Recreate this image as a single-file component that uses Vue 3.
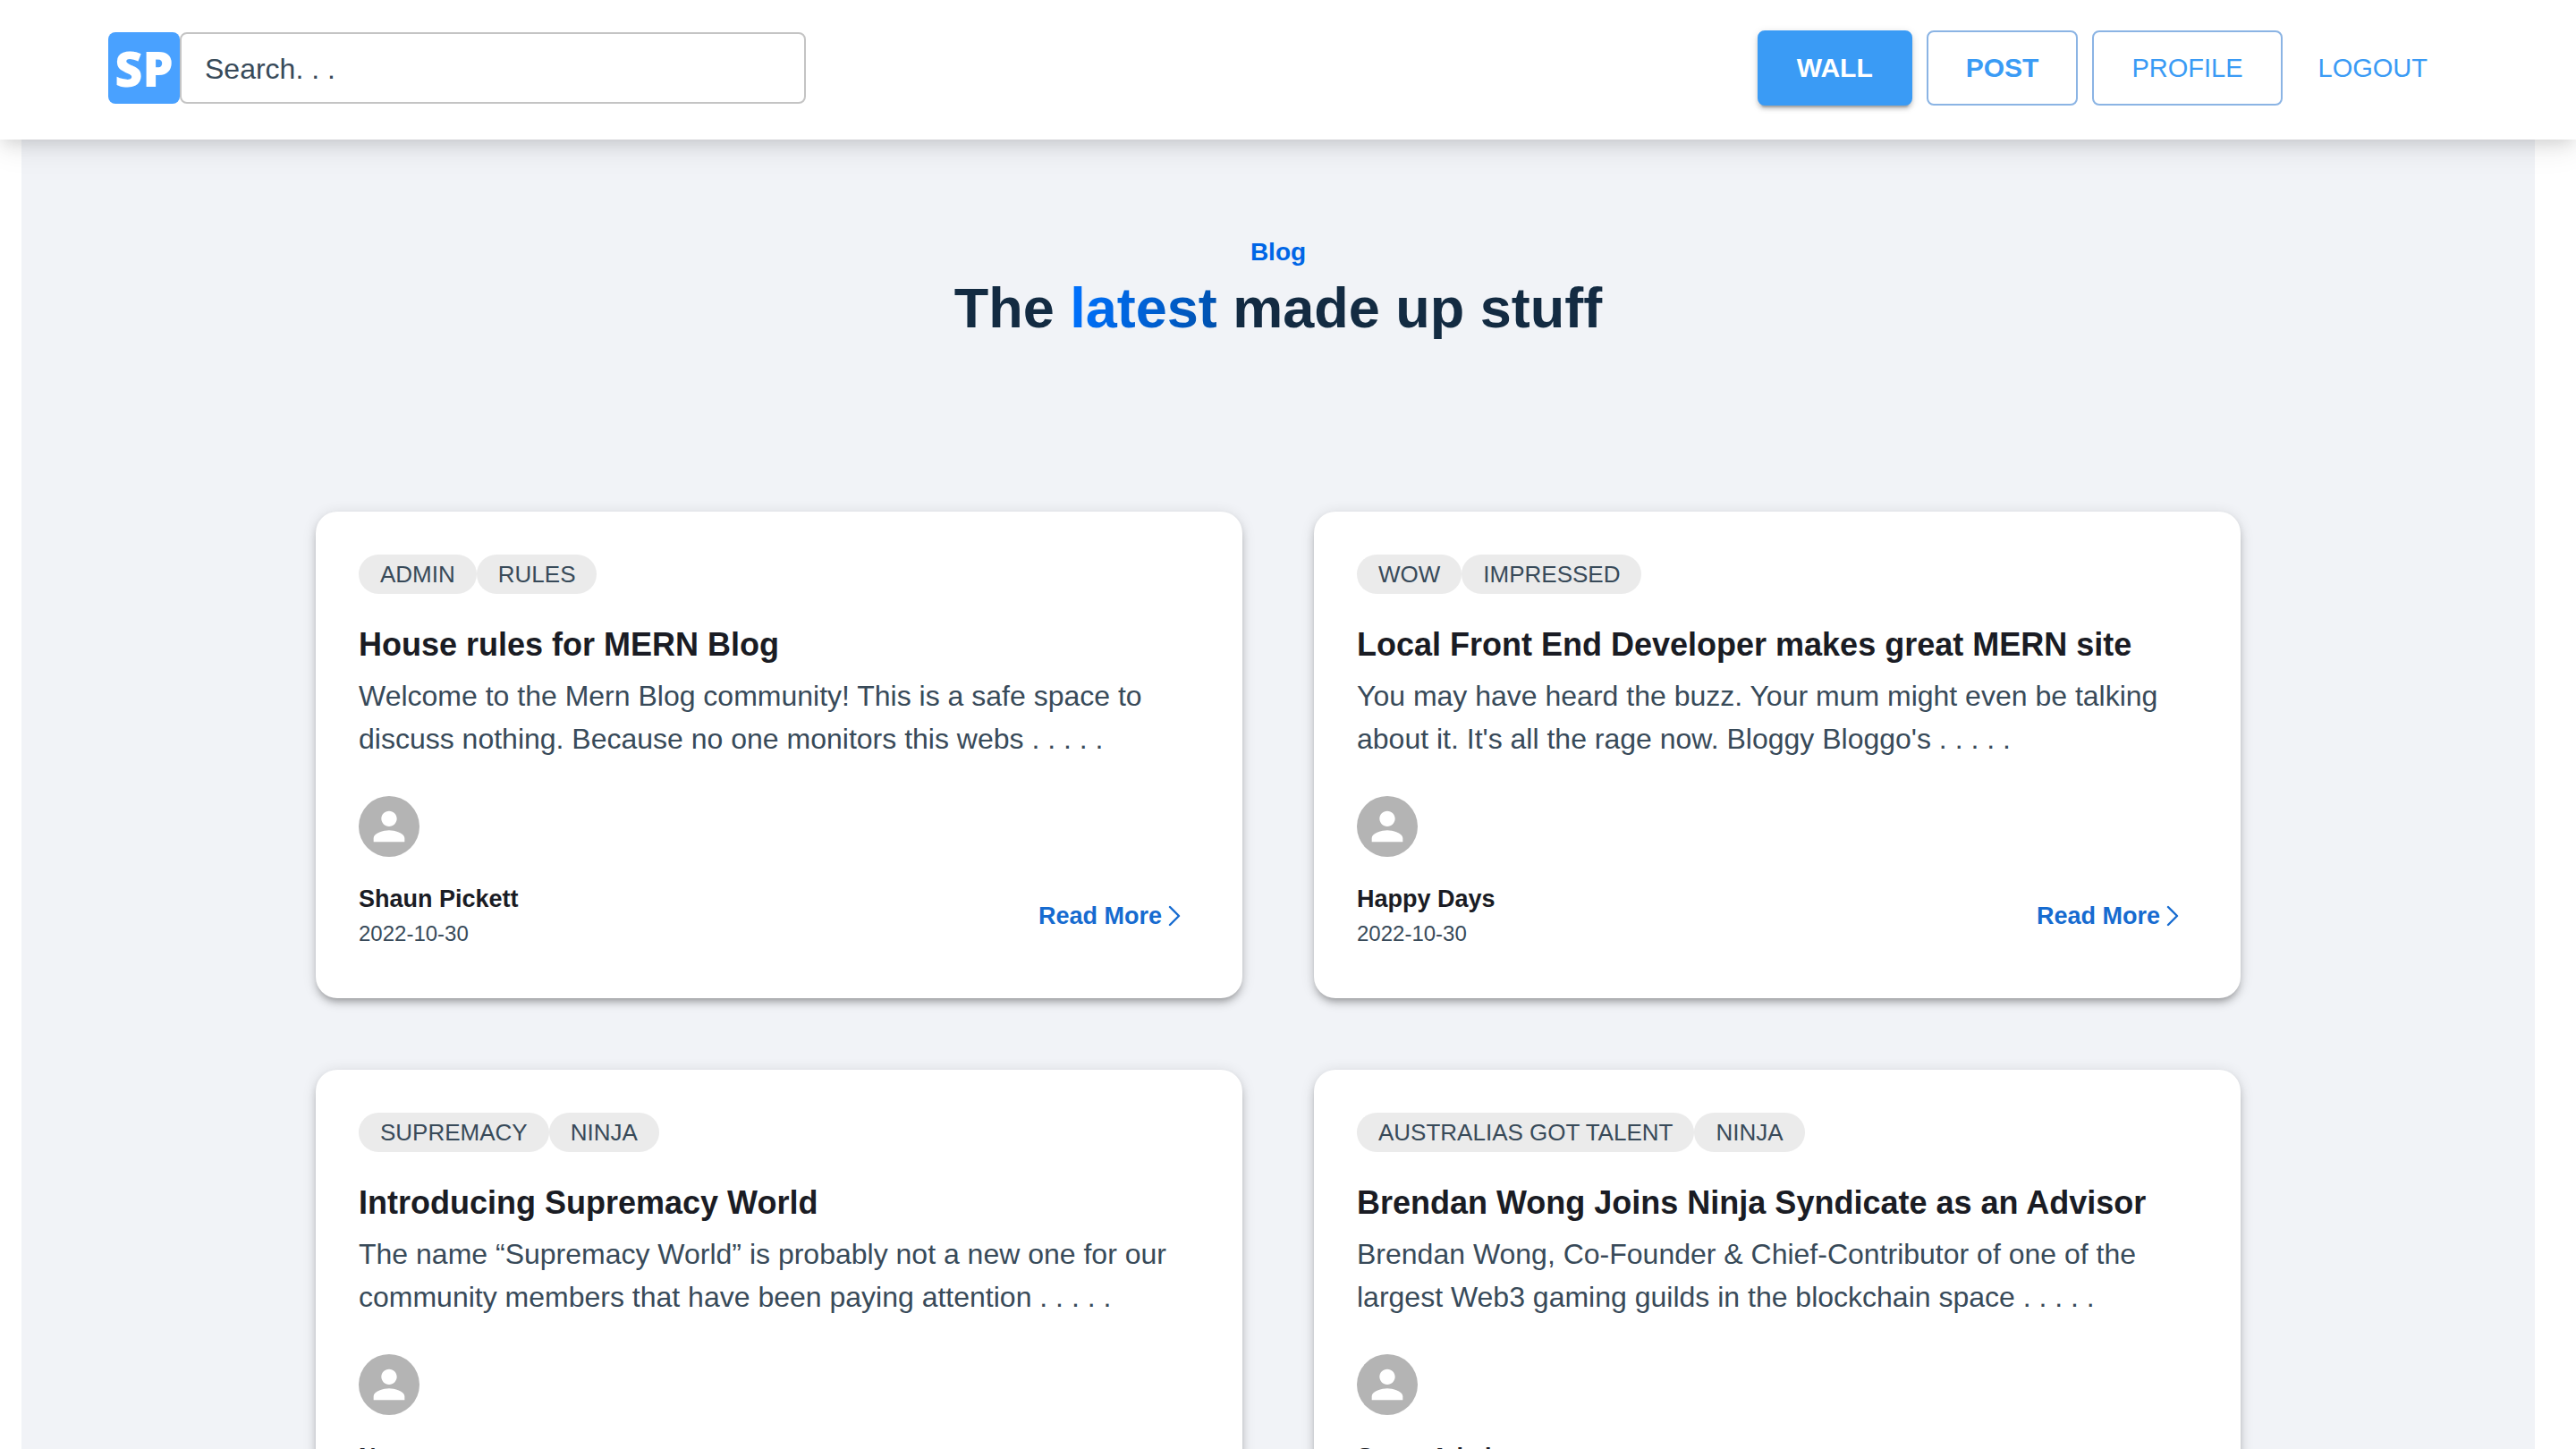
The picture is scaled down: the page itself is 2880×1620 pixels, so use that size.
<script setup>
import { ref } from 'vue'

const query = ref('')

const posts = [
  {
    tags: ['ADMIN', 'RULES'],
    title: 'House rules for MERN Blog',
    excerpt:
      'Welcome to the Mern Blog community! This is a safe space to discuss nothing. Because no one monitors this webs . . . . .',
    author: 'Shaun Pickett',
    date: '2022-10-30',
  },
  {
    tags: ['WOW', 'IMPRESSED'],
    title: 'Local Front End Developer makes great MERN site',
    excerpt:
      "You may have heard the buzz. Your mum might even be talking about it. It's all the rage now. Bloggy Bloggo's . . . . .",
    author: 'Happy Days',
    date: '2022-10-30',
  },
  {
    tags: ['SUPREMACY', 'NINJA'],
    title: 'Introducing Supremacy World',
    excerpt:
      'The name “Supremacy World” is probably not a new one for our community members that have been paying attention . . . . .',
    author: 'None',
    date: '2022-10-30',
  },
  {
    tags: ['AUSTRALIAS GOT TALENT', 'NINJA'],
    title: 'Brendan Wong Joins Ninja Syndicate as an Advisor',
    excerpt:
      'Brendan Wong, Co-Founder & Chief-Contributor of one of the largest Web3 gaming guilds in the blockchain space . . . . .',
    author: 'Super Admin',
    date: '2022-10-30',
  },
]
</script>

<template>
  <div class="app">
    <header class="topbar">
      <div class="brand">
        <a class="logo" href="#">SP</a>
        <input v-model="query" class="search" type="text" placeholder="Search. . ." aria-label="Search" />
      </div>
      <nav class="nav">
        <button class="btn contained" type="button">WALL</button>
        <button class="btn outlined strong" type="button">POST</button>
        <button class="btn outlined" type="button">PROFILE</button>
        <button class="btn text" type="button">LOGOUT</button>
      </nav>
    </header>

    <main class="page">
      <section class="hero">
        <p class="eyebrow">Blog</p>
        <h1 class="headline">The <span class="accent">latest</span> made up stuff</h1>
      </section>

      <section class="grid">
        <article v-for="post in posts" :key="post.title" class="card">
          <ul class="tags">
            <li v-for="tag in post.tags" :key="tag" class="tag">{{ tag }}</li>
          </ul>
          <h2 class="title">{{ post.title }}</h2>
          <p class="excerpt">{{ post.excerpt }}</p>
          <div class="avatar">
            <svg class="person" viewBox="0 0 24 24" aria-hidden="true">
              <path
                fill="currentColor"
                d="M12 12c2.21 0 4-1.79 4-4s-1.79-4-4-4-4 1.79-4 4 1.79 4 4 4zm0 2c-2.67 0-8 1.34-8 4v2h16v-2c0-2.66-5.33-4-8-4z"
              />
            </svg>
          </div>
          <footer class="meta">
            <div>
              <p class="author">{{ post.author }}</p>
              <p class="date">{{ post.date }}</p>
            </div>
            <a class="more" href="#">
              Read More
              <svg class="chevron" viewBox="0 0 16 24" aria-hidden="true">
                <path d="M3 2l10 10L3 22" fill="none" stroke="currentColor" stroke-width="2.4" stroke-linecap="round" stroke-linejoin="round" />
              </svg>
            </a>
          </footer>
        </article>
      </section>
    </main>
  </div>
</template>

<style>
body {
  margin: 0;
  background: #fff;
}
</style>

<style scoped>
.app {
  height: 100vh;
  overflow: hidden;
  font-family: "Liberation Sans", Arial, sans-serif;
  color: #384a59;
}

.app * {
  box-sizing: border-box;
}

p,
h1,
h2,
ul {
  margin: 0;
  padding: 0;
}

.topbar {
  position: relative;
  z-index: 1;
  display: flex;
  align-items: center;
  justify-content: space-between;
  padding: 34px 142px 38px 121px;
  background: #fff;
  box-shadow:
    0 8px 16px -4px rgba(0, 0, 0, 0.1),
    0 8px 32px rgba(0, 0, 0, 0.1);
}

.brand {
  display: flex;
  align-items: center;
}

.logo {
  display: flex;
  align-items: center;
  justify-content: center;
  width: 80px;
  height: 80px;
  border-radius: 8px;
  background: #49a1ff;
  color: #fff;
  font-family: "Open Sans", sans-serif;
  font-size: 54px;
  font-weight: 800;
  line-height: 78px;
  text-decoration: none;
}

.search {
  width: 700px;
  height: 80px;
  padding: 2px 26px 0;
  border: 2px solid #c4c4c4;
  border-radius: 8px;
  background: #fff;
  color: #384a59;
  font-family: inherit;
  font-size: 32px;
}

.search::placeholder {
  color: #384a59;
  opacity: 1;
}

.nav {
  display: flex;
  gap: 16px;
}

.btn {
  height: 84px;
  padding: 0 42px;
  border: 2px solid transparent;
  border-radius: 8px;
  background: transparent;
  color: #3a9bf5;
  font-family: inherit;
  font-size: 29px;
}

.btn.contained {
  border-color: #3a9bf5;
  background: #3a9bf5;
  color: #fff;
  font-size: 30px;
  font-weight: 700;
  box-shadow:
    0 6px 2px -4px rgba(0, 0, 0, 0.2),
    0 4px 4px rgba(0, 0, 0, 0.14),
    0 2px 10px rgba(0, 0, 0, 0.12);
}

.btn.outlined {
  border-color: #8bb4e4;
}

.btn.strong {
  font-size: 30px;
  font-weight: 700;
}

.btn.text {
  padding: 0 22px;
}

.page {
  margin: 0 46px 0 24px;
  padding: 105px 80px 80px;
  background: #f1f3f7;
}

.hero {
  margin-bottom: 187px;
  text-align: center;
}

.eyebrow {
  color: #0066e6;
  font-size: 28px;
  font-weight: 700;
  line-height: 42px;
}

.headline {
  color: #132b42;
  font-size: 63px;
  font-weight: 700;
  line-height: 82px;
}

.accent {
  background: linear-gradient(98deg, #0072ff, #0051ad);
  background-clip: text;
  -webkit-background-clip: text;
  color: transparent;
}

.grid {
  display: grid;
  grid-template-columns: repeat(2, minmax(0, 1fr));
  gap: 80px;
  max-width: 2152px;
  margin: 0 auto;
}

.card {
  padding: 48px 48px 54px;
  border-radius: 24px;
  background: #fff;
  box-shadow:
    0 6px 6px -4px rgba(0, 0, 0, 0.2),
    0 6px 8px rgba(0, 0, 0, 0.14),
    0 2px 16px rgba(0, 0, 0, 0.12);
}

.tags {
  display: flex;
  margin-bottom: 32px;
  list-style: none;
}

.tag {
  padding: 0 24px;
  border-radius: 22px;
  background: #ebebeb;
  font-size: 26px;
  line-height: 44px;
}

.title {
  margin-bottom: 8px;
  color: #1a1c24;
  font-size: 36px;
  font-weight: 700;
  line-height: 50px;
}

.excerpt {
  font-size: 32px;
  line-height: 48px;
}

.avatar {
  display: flex;
  align-items: center;
  justify-content: center;
  width: 68px;
  height: 68px;
  margin: 40px 0 26px;
  border-radius: 50%;
  background: #b4b4b4;
  color: #fff;
}

.person {
  width: 52px;
  height: 52px;
}

.meta {
  display: flex;
  align-items: center;
  justify-content: space-between;
}

.author {
  color: #1a1c24;
  font-size: 27px;
  font-weight: 700;
  line-height: 42px;
}

.date {
  font-size: 24px;
  line-height: 36px;
}

.more {
  display: flex;
  align-items: center;
  gap: 6px;
  padding: 2px 20px 0;
  color: #166bd0;
  font-size: 27px;
  font-weight: 700;
  line-height: 42px;
  text-decoration: none;
}

.chevron {
  width: 16px;
  height: 24px;
}
</style>
